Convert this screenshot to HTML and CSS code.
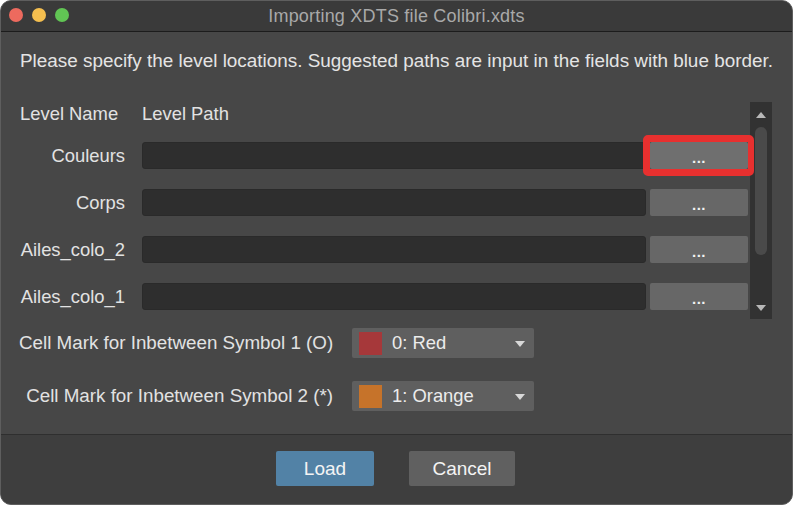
FILE: index.html
```html
<!DOCTYPE html>
<html lang="en">
<head>
    <meta charset="UTF-8">
    <title>Importing XDTS file Colibri.xdts</title>
    <link rel="stylesheet" href="styles.css">
</head>
<body>
    <div class="window">
        <div class="titlebar">
            <div class="lights">
                <span class="light red"></span>
                <span class="light yellow"></span>
                <span class="light green"></span>
            </div>
            <div class="title">Importing XDTS file Colibri.xdts</div>
        </div>

        <div class="content">
            <p class="intro">Please specify the level locations. Suggested paths are input in the fields with blue border.</p>

            <div class="levels">
                <div class="level-list">
                    <div class="level-head">
                        <span class="head-name">Level Name</span>
                        <span class="head-path">Level Path</span>
                    </div>
                    <div class="level-row">
                        <span class="level-name">Couleurs</span>
                        <div class="path-field"></div>
                        <button class="browse highlighted">...</button>
                    </div>
                    <div class="level-row">
                        <span class="level-name">Corps</span>
                        <div class="path-field"></div>
                        <button class="browse">...</button>
                    </div>
                    <div class="level-row">
                        <span class="level-name">Ailes_colo_2</span>
                        <div class="path-field"></div>
                        <button class="browse">...</button>
                    </div>
                    <div class="level-row">
                        <span class="level-name">Ailes_colo_1</span>
                        <div class="path-field"></div>
                        <button class="browse">...</button>
                    </div>
                </div>
                <div class="scrollbar">
                    <span class="arrow up"></span>
                    <div class="track"><div class="thumb"></div></div>
                    <span class="arrow down"></span>
                </div>
            </div>

            <div class="marks">
                <div class="mark-row">
                    <span class="mark-label">Cell Mark for Inbetween Symbol 1 (O)</span>
                    <div class="combo">
                        <span class="swatch swatch-red"></span>
                        <span class="combo-text">0: Red</span>
                        <span class="combo-arrow"></span>
                    </div>
                </div>
                <div class="mark-row">
                    <span class="mark-label">Cell Mark for Inbetween Symbol 2 (*)</span>
                    <div class="combo">
                        <span class="swatch swatch-orange"></span>
                        <span class="combo-text">1: Orange</span>
                        <span class="combo-arrow"></span>
                    </div>
                </div>
            </div>
        </div>

        <div class="footer">
            <button class="btn btn-load">Load</button>
            <button class="btn btn-cancel">Cancel</button>
        </div>
    </div>
</body>
</html>
```

FILE: styles.css
```css
* {
    box-sizing: border-box;
}

body {
    margin: 0;
    background-color: #ffffff;
    font-family: "Liberation Sans", Arial, sans-serif;
    color: #e2e2e2;
}

.window {
    width: 793px;
    height: 505px;
    border: 1px solid #5e5e5e;
    border-radius: 11px;
    overflow: hidden;
    background-color: #474747;
    display: flex;
    flex-direction: column;
}

/* title bar */
.titlebar {
    position: relative;
    height: 31px;
    background-color: #3a3a3a;
    border-bottom: 1px solid #1c1c1c;
    display: flex;
    align-items: center;
    justify-content: center;
    flex-shrink: 0;
}

.lights {
    position: absolute;
    left: 8px;
    top: 7px;
    display: flex;
    gap: 9px;
}

.light {
    width: 14px;
    height: 14px;
    border-radius: 50%;
}

.red { background-color: #ed6a5e; }
.yellow { background-color: #f5bf4f; }
.green { background-color: #61c554; }

.title {
    font-size: 18px;
    color: #a9a9a9;
    letter-spacing: 0.2px;
}

/* main content */
.content {
    flex: 1;
    padding: 19px 20px 0 18px;
}

.intro {
    margin: 0 0 0 1px;
    font-size: 18.9px;
    line-height: 20px;
    color: #e4e4e4;
    white-space: nowrap;
}

.levels {
    margin-top: 29px;
    height: 217px;
    display: flex;
    align-items: flex-start;
}

.level-list {
    flex: 1;
    height: 217px;
}

.level-head {
    height: 28px;
    display: flex;
    align-items: center;
    font-size: 18.4px;
    margin-bottom: 14px;
    padding-left: 1px;
}

.head-name {
    width: 122px;
}

.level-row {
    height: 27px;
    display: flex;
    align-items: center;
    margin-bottom: 20px;
}

.level-name {
    width: 106px;
    margin-right: 17px;
    text-align: right;
    font-size: 18.4px;
    white-space: nowrap;
}

.path-field {
    width: 504px;
    height: 27px;
    background-color: #2e2e2e;
    border: 1px solid #2a2a2a;
    border-radius: 3px;
    margin-right: 4px;
}

.browse {
    position: relative;
    width: 98px;
    height: 27px;
    border: none;
    border-radius: 2px;
    background-color: #676767;
    color: #f2f2f2;
    font-family: "Liberation Sans", Arial, sans-serif;
    font-size: 15px;
    font-weight: bold;
    padding: 4px 0 0 0;
    letter-spacing: 0.5px;
}

.browse.highlighted {
    background-color: #6f6f6f;
}

.browse.highlighted::after {
    content: "";
    position: absolute;
    top: -7px;
    bottom: -7px;
    left: -7px;
    right: -6px;
    border-style: solid;
    border-color: #e8302f;
    border-width: 7px 6px 7px 7px;
    border-radius: 5px;
}

/* scrollbar */
.scrollbar {
    width: 22px;
    height: 217px;
    margin-left: 2px;
    margin-top: 2px;
    background-color: #323232;
    display: flex;
    flex-direction: column;
    align-items: center;
    padding: 10px 0 8px 0;
}

.arrow {
    width: 0;
    height: 0;
    border-left: 5px solid transparent;
    border-right: 5px solid transparent;
}

.arrow.up {
    border-bottom: 6px solid #b8b8b8;
}

.arrow.down {
    border-top: 6px solid #b8b8b8;
}

.track {
    flex: 1;
    width: 12px;
    padding-top: 9px;
}

.thumb {
    height: 128px;
    border-radius: 6px;
    background-color: #4a4a4a;
}

/* cell marks */
.marks {
    margin-top: 11px;
}

.mark-row {
    display: flex;
    align-items: center;
    margin-bottom: 23px;
}

.mark-label {
    width: 314px;
    text-align: right;
    margin-right: 19px;
    font-size: 18.8px;
    white-space: nowrap;
}

.combo {
    position: relative;
    width: 182px;
    height: 30px;
    background-color: #5f5f5f;
    border-radius: 2px;
    display: flex;
    align-items: center;
    padding-left: 7px;
}

.swatch {
    width: 23px;
    height: 23px;
}

.swatch-red { background-color: #a6383a; }
.swatch-orange { background-color: #c6732a; }

.combo-text {
    margin-left: 10px;
    font-size: 18.4px;
    color: #ececec;
}

.combo-arrow {
    position: absolute;
    right: 9px;
    top: 13px;
    border-left: 5px solid transparent;
    border-right: 5px solid transparent;
    border-top: 6px solid #d8d8d8;
}

/* footer */
.footer {
    height: 71px;
    flex-shrink: 0;
    border-top: 1px solid #2f2f2f;
    background-color: #3e3e3e;
    display: flex;
    justify-content: center;
    align-items: flex-start;
    padding: 16px 2px 0 0;
    gap: 35px;
}

.btn {
    height: 35px;
    border: none;
    border-radius: 2px;
    color: #f4f4f4;
    font-family: "Liberation Sans", Arial, sans-serif;
    font-size: 19px;
}

.btn-load {
    width: 98px;
    background-color: #5282a6;
}

.btn-cancel {
    width: 106px;
    background-color: #606060;
}
```
